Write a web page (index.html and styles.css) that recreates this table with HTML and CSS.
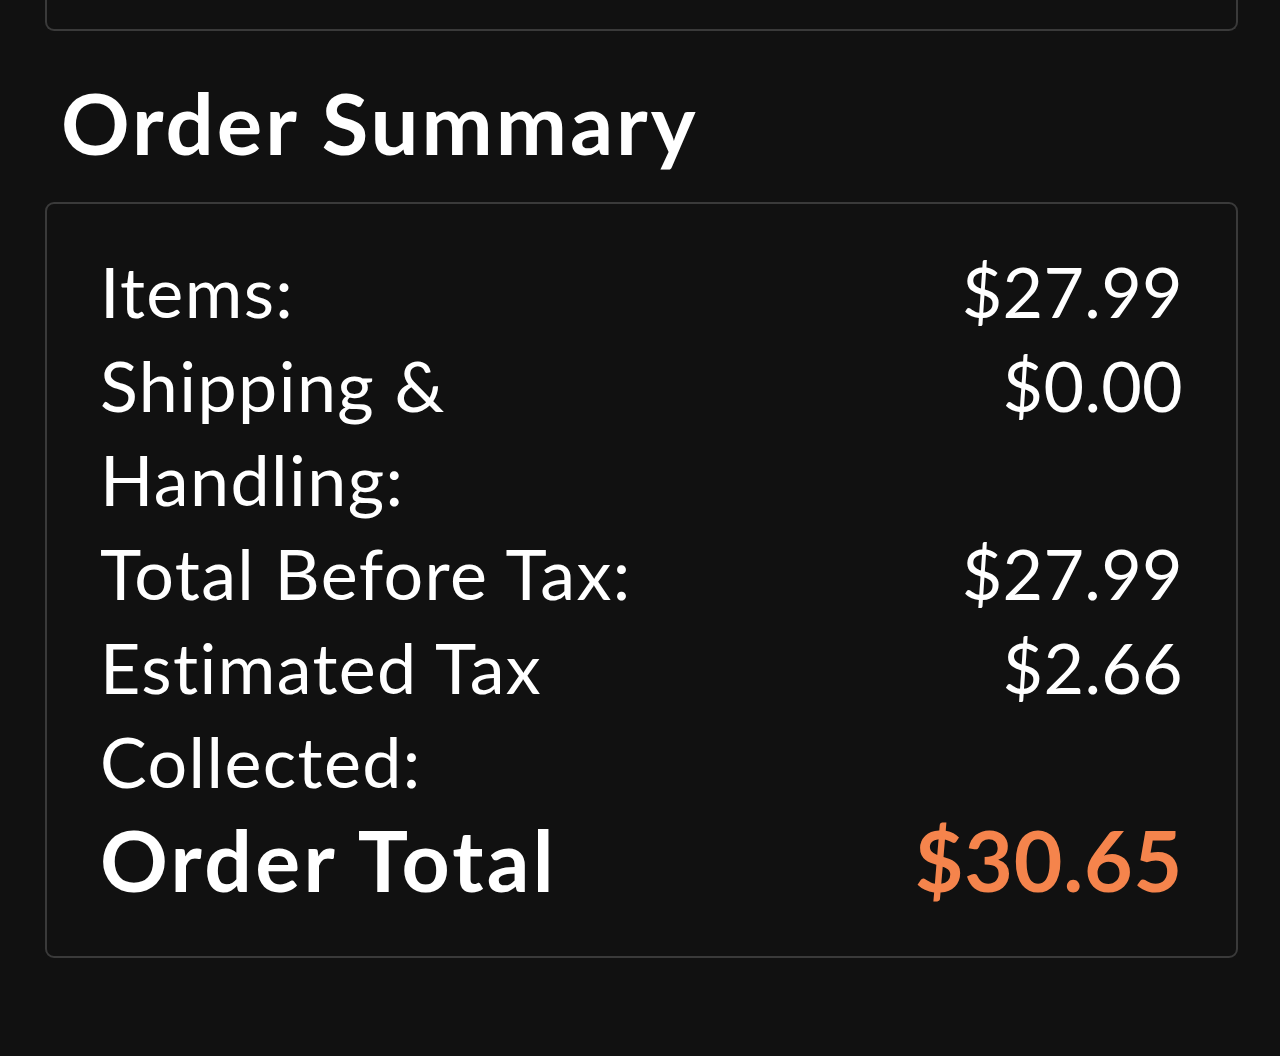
FILE: index.html
```html
<!DOCTYPE html>
<html lang="en">
<head>
<meta charset="utf-8">
<title>Order Summary</title>
<link rel="stylesheet" href="styles.css">
</head>
<body>
<div class="page">
  <div class="prev-card"></div>
  <h2 class="title">Order Summary</h2>
  <div class="summary">
    <div class="row"><div class="label">Items:</div><div class="value">$27.99</div></div>
    <div class="row"><div class="label">Shipping &amp; Handling:</div><div class="value">$0.00</div></div>
    <div class="row"><div class="label">Total Before Tax:</div><div class="value">$27.99</div></div>
    <div class="row"><div class="label">Estimated Tax Collected:</div><div class="value">$2.66</div></div>
    <div class="row total"><div class="label">Order Total</div><div class="value">$30.65</div></div>
  </div>
</div>
</body>
</html>
```

FILE: styles.css
```css
html, body {
  margin: 0;
  padding: 0;
  background: #111111;
}
body {
  font-family: Lato, "Noto Sans", "Liberation Sans", sans-serif;
  font-variant-ligatures: none;
  color: #ffffff;
  width: 1280px;
  height: 1056px;
  overflow: hidden;
}
.page {
  padding: 0 42px 0 45px;
}
.prev-card {
  height: 29px;
  border: 2px solid #3a3a3a;
  border-top: 0;
  border-radius: 0 0 9px 9px;
}
.title {
  margin: 41px 0 30px 16px;
  font-size: 85px;
  line-height: 100px;
  font-weight: 700;
  letter-spacing: 3px;
}
.summary {
  border: 2px solid #3a3a3a;
  border-radius: 9px;
  padding: 40px 53px 45px 53px;
}
.row {
  display: flex;
  justify-content: space-between;
  align-items: flex-start;
  font-size: 70px;
  line-height: 94px;
}
.label {
  width: 640px;
  letter-spacing: 1.4px;
}
.value {
  text-align: right;
  letter-spacing: 0.3px;
}
.row.total {
  font-size: 84px;
  line-height: 103px;
  font-weight: 700;
}
.row.total .label {
  letter-spacing: 3.4px;
}
.row.total .value {
  color: #f5844c;
  letter-spacing: 0.8px;
}
```
